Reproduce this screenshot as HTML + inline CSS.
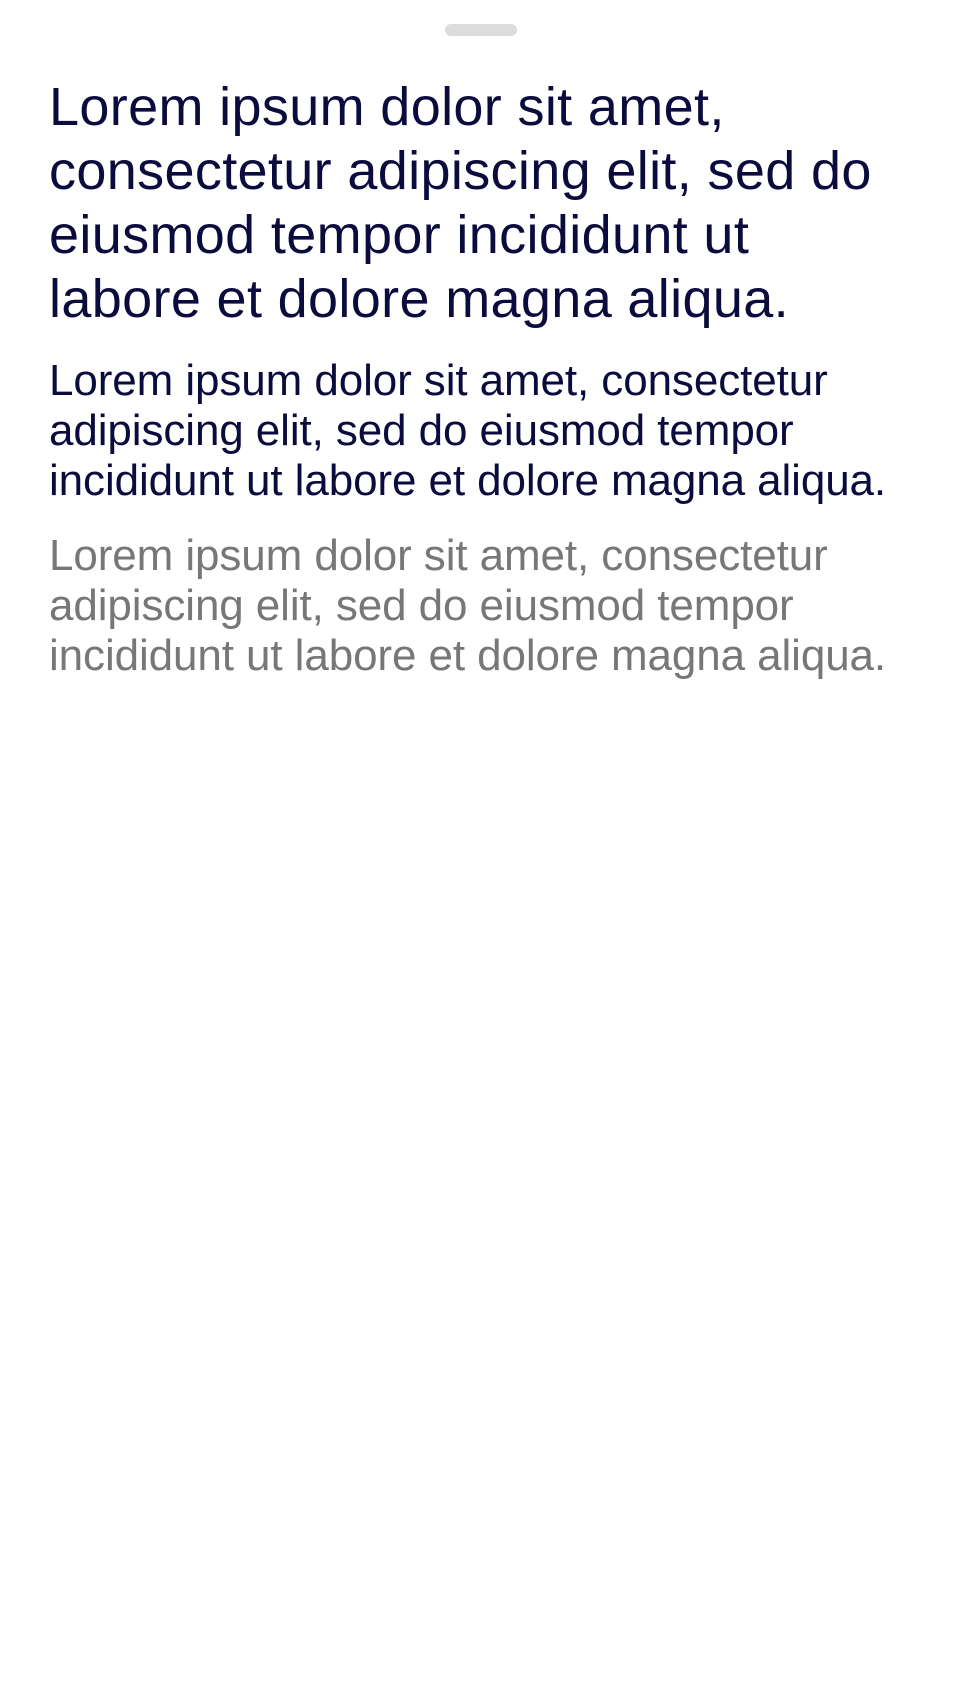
<!DOCTYPE html>
<html><head><meta charset="utf-8"><style>
html,body{margin:0;padding:0;background:#fff;width:960px;height:1704px;overflow:hidden}
body{font-family:"Liberation Sans",sans-serif;position:relative}
.h{position:absolute;left:445px;top:24px;width:72px;height:12px;border-radius:6px;background:#dcdcdc}
p{position:absolute;left:49px;margin:0;width:900px}
.t{top:75px;font-size:54px;line-height:64px;color:#0b0b3d;width:900px;letter-spacing:0.35px}
.b1{top:356px;font-size:44px;line-height:50px;color:#0b0b3d;letter-spacing:-0.1px}
.b2{top:531px;font-size:44px;line-height:50px;color:#777;letter-spacing:-0.1px}
</style></head><body>
<div class="h"></div>
<p class="t">Lorem ipsum dolor sit amet,<br>consectetur adipiscing elit, sed do<br>eiusmod tempor incididunt ut<br>labore et dolore magna aliqua.</p>
<p class="b1">Lorem ipsum dolor sit amet, consectetur<br>adipiscing elit, sed do eiusmod tempor<br>incididunt ut labore et dolore magna aliqua.</p>
<p class="b2">Lorem ipsum dolor sit amet, consectetur<br>adipiscing elit, sed do eiusmod tempor<br>incididunt ut labore et dolore magna aliqua.</p>
</body></html>
